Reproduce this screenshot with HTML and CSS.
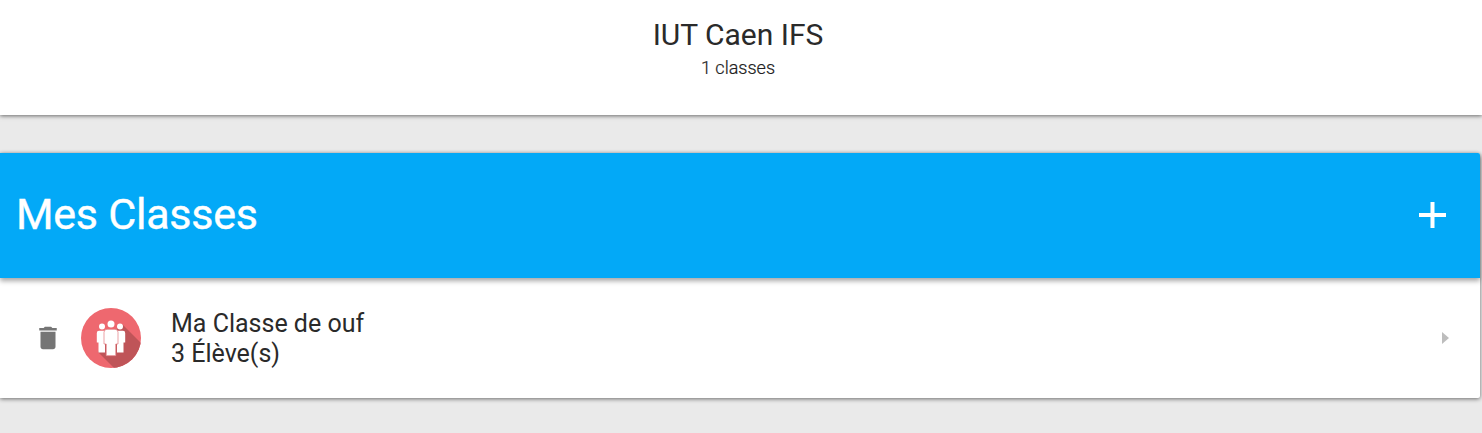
FILE: index.html
```html
<!DOCTYPE html>
<html lang="fr">
<head>
<meta charset="utf-8">
<title>IUT Caen IFS</title>
<link rel="stylesheet" href="styles.css">
</head>
<body>
<header class="school">
  <h1 class="school-name">IUT Caen IFS</h1>
  <p class="school-count">1 classes</p>
</header>
<main class="card">
  <div class="toolbar">
    <h2 class="toolbar-title">Mes Classes</h2>
    <svg class="add" viewBox="0 0 27 26"><path fill="#fff" d="M11.500 0h4v11H27v4H15.500v11h-4V15H0v-4h11.500z"/></svg>
  </div>
  <div class="row">
    <svg class="trash" viewBox="0 0 24 24"><path fill="#757575" d="M6 19c0 1.100.9 2 2 2h8c1.100 0 2-.9 2-2V7H6v12zM19 4h-3.500l-1-1h-5l-1 1H5v2h14V4z"/></svg>
    <svg class="avatar" viewBox="0 0 60 60">
      <defs><clipPath id="disc"><circle cx="30" cy="30" r="30"/></clipPath></defs>
      <g clip-path="url(#disc)">
        <path fill="#ee686f" d="M0 0h60v60H0z"/>
        <path fill="#bf5458" d="M41 16l23 23v25H37L17 44l10-15z"/>
      </g>
      <g fill="#fff">
        <circle cx="21" cy="18.500" r="3"/>
        <circle cx="39" cy="18.500" r="3"/>
        <path d="M18 22.700h6v21.800h-6.500V34.500h-1.700V25q0-2.300 2.200-2.300z"/>
        <path d="M42 22.700h-6v21.800h6.500V34.500h1.700V25q0-2.300-2.200-2.300z"/>
        <path stroke="#e2797e" stroke-width=".7" d="M26 21.300h8q3 0 3 3V36h-2.200v11.700h-9.600V36H23V24.300q0-3 3-3z"/>
        <circle cx="30" cy="16" r="3.500"/>
      </g>
    </svg>
    <div class="info">
      <div>Ma Classe de ouf</div>
      <div>3 Élève(s)</div>
    </div>
    <svg class="arrow" viewBox="0 0 7 12"><path fill="#bdbdbd" d="M0 0l7 6-7 6z"/></svg>
  </div>
</main>
</body>
</html>
```
FILE: styles.css
```css
body {
  margin: 0;
  height: 433px;
  overflow: hidden;
  background: #eaeaea;
  color: #2a2a2a;
  font-family: Roboto, sans-serif;
}
.school {
  box-sizing: border-box;
  height: 115px;
  padding: 17px 6px 0 0;
  background: #fff;
  text-align: center;
  box-shadow: 0 1px 4px rgba(0, 0, 0, .55);
}
.school-name {
  margin: 0;
  font-size: 30px;
  line-height: 36px;
  font-weight: 400;
}
.school-count {
  margin: 4px 0 0;
  color: #212121;
  font-size: 18px;
  line-height: 22px;
  font-weight: 300;
  -webkit-text-stroke: .2px #212121;
}
.card {
  margin: 38px 2px 0 0;
  background: #fff;
  border-radius: 0 2px 2px 0;
  box-shadow: 0 1px 4px rgba(0, 0, 0, .55);
}
.toolbar {
  position: relative;
  box-sizing: border-box;
  display: flex;
  align-items: center;
  justify-content: space-between;
  height: 125px;
  padding: 0 34px 2px 16px;
  background: #03a9f7;
  border-radius: 0 2px 0 0;
  box-shadow: 0 3px 5px rgba(0, 0, 0, .35);
  color: #fff;
}
.toolbar-title {
  margin: 0 0 2px;
  font-size: 43px;
  line-height: 52px;
  font-weight: 400;
  letter-spacing: -.25px;
  -webkit-text-stroke: .4px #fff;
}
.add {
  width: 27px;
  height: 26px;
}
.row {
  display: flex;
  align-items: center;
  box-sizing: border-box;
  height: 120px;
  padding: 0 31px 0 33px;
}
.trash {
  width: 30px;
  height: 30px;
}
.avatar {
  width: 60px;
  height: 60px;
  margin-left: 18px;
}
.info {
  flex: 1;
  margin-left: 30px;
  padding-top: 2px;
  font-size: 25px;
  line-height: 30px;
}
.arrow {
  width: 7px;
  height: 12px;
}
```
